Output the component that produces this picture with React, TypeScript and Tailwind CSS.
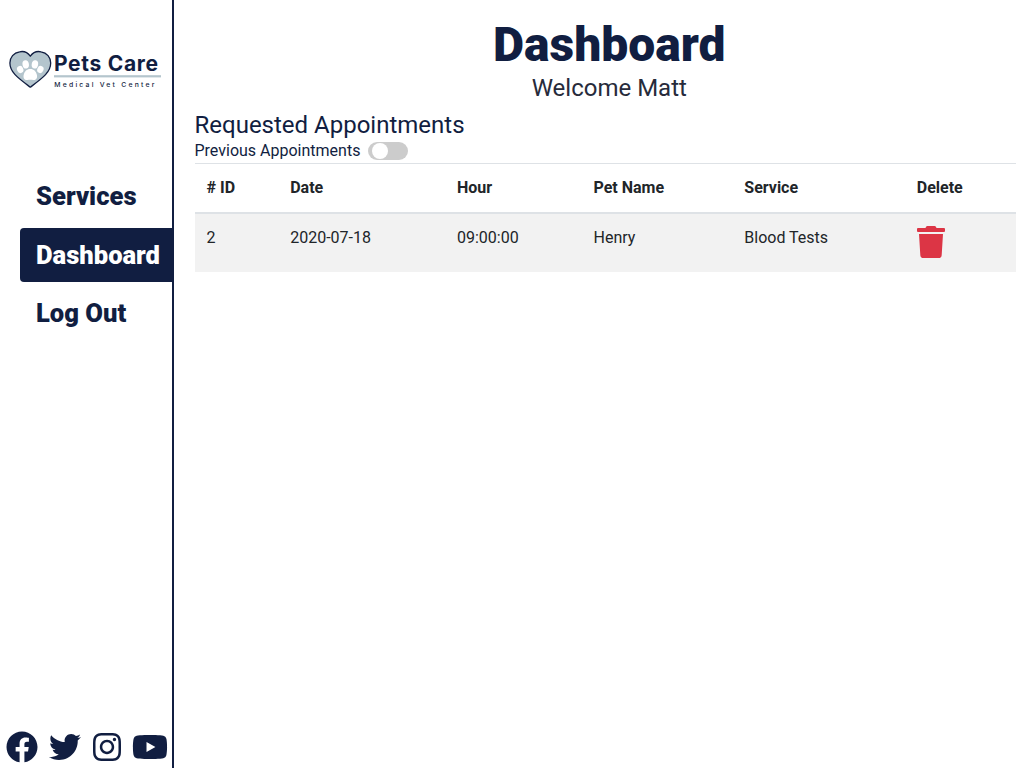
import { FaFacebook, FaInstagram, FaTrash, FaTwitter, FaYoutube } from "react-icons/fa";

const columns = ["# ID", "Date", "Hour", "Pet Name", "Service", "Delete"];
const appointments = [["2", "2020-07-18", "09:00:00", "Henry", "Blood Tests"]];
const grid = "grid grid-cols-[83.7px_166.8px_136.5px_150.8px_172.5px_1fr]";

function Logo() {
  return (
    <svg width="156" height="42" viewBox="0 0 156 42" className="block" role="img" aria-label="Pets Care">
      <path
        d="M22.3 7.2C19.6 3.4 15.3 2 11.6 2.8C5.7 3.6 1.9 8.3 1.9 14C1.9 23.5 10.6 29.4 22.3 38.2C34 29.4 42.7 23.5 42.7 14C42.7 8.3 38.9 3.6 33 2.8C29.3 2 25 3.4 22.3 7.2Z"
        fill="#b4c5cd"
        stroke="#111e41"
        strokeWidth="1.3"
        strokeLinejoin="round"
      />
      <g fill="#fff">
        <ellipse cx="17.7" cy="15.4" rx="3.2" ry="4.2" transform="rotate(-10 17.7 15.4)" />
        <ellipse cx="26.9" cy="15.4" rx="3.2" ry="4.2" transform="rotate(10 26.9 15.4)" />
        <ellipse cx="12.2" cy="20.5" rx="3.1" ry="3.6" transform="rotate(-25 12.2 20.5)" />
        <ellipse cx="32.4" cy="20.5" rx="3.1" ry="3.6" transform="rotate(25 32.4 20.5)" />
        <path d="M22.3 20C26 20 28 22.6 28.7 25.2C29.8 28.4 28.4 31.4 25.3 31C23.2 30.6 21.4 30.6 19.3 31C16.2 31.4 14.8 28.4 15.9 25.2C16.6 22.6 18.6 20 22.3 20Z" />
      </g>
      <text x="46" y="22" textLength="104" className="fill-[#111e41] font-['Inter',sans-serif] text-[21px] font-bold">
        Pets Care
      </text>
      <rect x="46" y="26.2" width="107" height="2.2" fill="#b4c5cd" />
      <text x="46.3" y="37.6" textLength="100" className="fill-[#111e41] font-['Inter',sans-serif] text-[6.8px] font-medium">
        Medical Vet Center
      </text>
    </svg>
  );
}

function NavLink({ label, active = false }: { label: string; active?: boolean }) {
  return (
    <a
      className={`block rounded-l px-4 py-2 text-[25.6px] leading-[38.4px] font-black ${
        active ? "bg-[#111e41] text-white" : "text-[#111e41]"
      }`}
    >
      {label}
    </a>
  );
}

export default function App() {
  return (
    <div className="flex h-screen overflow-hidden bg-white font-[Roboto,sans-serif] text-base leading-6 text-[#212529]">
      <aside className="flex w-[174px] shrink-0 flex-col border-r-2 border-[#111e41]">
        <div className="pt-[49px] pl-2">
          <Logo />
        </div>
        <nav className="mt-[78.2px] ml-5 flex flex-col gap-[4.2px]">
          <NavLink label="Services" />
          <NavLink label="Dashboard" active />
          <NavLink label="Log Out" />
        </nav>
        <div className="mt-auto flex gap-[11.3px] pb-[5px] pl-1.5 text-[32px] text-[#111e41]">
          <FaFacebook className="h-8 w-8 shrink-0" />
          <FaTwitter className="h-8 w-8 shrink-0" />
          <FaInstagram className="h-8 w-7 shrink-0" />
          <FaYoutube className="h-8 w-9 shrink-0" />
        </div>
      </aside>
      <main className="min-w-0 flex-1 pr-2 pl-[20.5px]">
        <header className="pt-4 text-center">
          <h1 className="ml-2 text-5xl leading-[57.6px] font-black text-[#111e41]">Dashboard</h1>
          <p className="ml-2 text-2xl leading-[28.8px] text-[#272b3b]">Welcome Matt</p>
        </header>
        <h2 className="mt-[8.6px] text-2xl leading-[28.2px] text-[#111e41]">Requested Appointments</h2>
        <div className="flex h-6 items-center gap-2 text-[#111e41]">
          <span>Previous Appointments</span>
          <span className="flex h-[18px] w-10 items-center rounded-full bg-[#ccc] pl-1">
            <span className="h-4 w-4 rounded-full bg-white" />
          </span>
        </div>
        <section>
          <div className={`${grid} h-[51px] border-t border-b-2 border-[#dee2e6] pt-3 font-bold`}>
            {columns.map((name) => (
              <div key={name} className="pl-3">
                {name}
              </div>
            ))}
          </div>
          {appointments.map((row) => (
            <div key={row[0]} className={`${grid} h-[58px] bg-[#f2f2f2] pt-3`}>
              {row.map((cell) => (
                <div key={cell} className="pl-3">
                  {cell}
                </div>
              ))}
              <div className="pl-3">
                <FaTrash className="h-8 w-7 text-[#dc3545]" />
              </div>
            </div>
          ))}
        </section>
      </main>
    </div>
  );
}
